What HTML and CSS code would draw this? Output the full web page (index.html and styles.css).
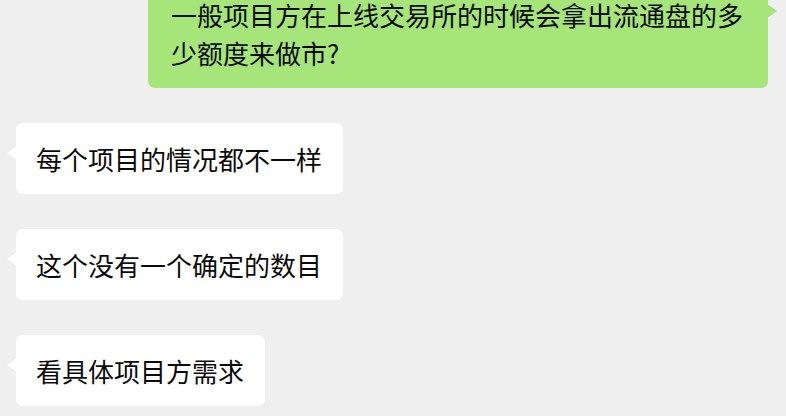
FILE: index.html
```html
<!DOCTYPE html>
<html lang="zh-CN">
<head>
<meta charset="utf-8">
<link rel="stylesheet" href="styles.css">
</head>
<body>
<div class="chat">
  <div class="row row-me">
    <div class="bubble bubble-me">一般项目方在上线交易所的时候会拿出流通盘的多少额度来做市?</div>
  </div>
  <div class="row row-other">
    <div class="bubble bubble-other">每个项目的情况都不一样</div>
  </div>
  <div class="row row-other">
    <div class="bubble bubble-other">这个没有一个确定的数目</div>
  </div>
  <div class="row row-other">
    <div class="bubble bubble-other">看具体项目方需求</div>
  </div>
</div>
</body>
</html>
```

FILE: styles.css
```css
html, body {
  margin: 0;
  padding: 0;
  background: #efefef;
}
body {
  width: 786px;
  height: 416px;
  overflow: hidden;
  font-family: "Noto Sans CJK SC", "Noto Sans", sans-serif;
  color: #0a0a0a;
}
.chat {
  display: flex;
  flex-direction: column;
  gap: 35px;
  margin-top: -21px;
}
.row {
  display: flex;
}
.row-me {
  justify-content: flex-end;
  padding-right: 18px;
}
.row-other {
  justify-content: flex-start;
  padding-left: 16px;
}
.bubble {
  position: relative;
  font-size: 26px;
  line-height: 38px;
  padding: 17px 21px 16px 20px;
  border-radius: 7px;
  box-sizing: border-box;
}
.bubble-me {
  background: #a6e57a;
  width: 620px;
  padding-left: 23px;
  padding-right: 23px;
}
.bubble-other {
  background: #ffffff;
}
.bubble-me::after {
  content: "";
  position: absolute;
  right: -9px;
  top: 25px;
  border-style: solid;
  border-width: 7px 0 7px 10px;
  border-color: transparent transparent transparent #a6e57a;
}
.bubble-other::before {
  content: "";
  position: absolute;
  left: -9px;
  top: 23px;
  border-style: solid;
  border-width: 7px 10px 7px 0;
  border-color: transparent #ffffff transparent transparent;
}
```
